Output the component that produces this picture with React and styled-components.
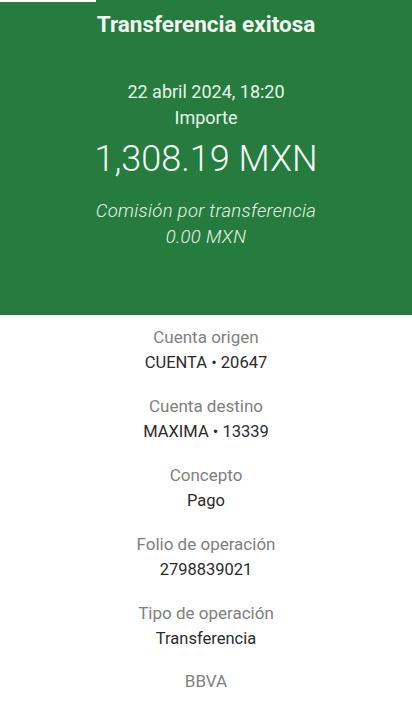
import React from 'react'
import styled, {createGlobalStyle} from 'styled-components'

const GlobalStyle = createGlobalStyle`
body {
    margin: 0;
    background: #ffffff;
    font-family: Roboto, "Liberation Sans", sans-serif;
}
`

const details = [
    {label: 'Cuenta origen', value: 'CUENTA • 20647'},
    {label: 'Cuenta destino', value: 'MAXIMA • 13339'},
    {label: 'Concepto', value: 'Pago'},
    {label: 'Folio de operación', value: '2798839021'},
    {label: 'Tipo de operación', value: 'Transferencia'},
]

export default function App() {
    return <Page>
        <GlobalStyle />
        <Header>
            <TopStrip />
            <Title>Transferencia exitosa</Title>
            <DateLine>22 abril 2024, 18:20</DateLine>
            <SubLine>Importe</SubLine>
            <Amount>1,308.19 MXN</Amount>
            <Fee>
                <FeeLine>Comisión por transferencia</FeeLine>
                <FeeLine>0.00 MXN</FeeLine>
            </Fee>
        </Header>
        <Details>
            {details.map(d => <Item key={d.label}>
                <Label>{d.label}</Label>
                <Value>{d.value}</Value>
            </Item>)}
            <Bank>BBVA</Bank>
        </Details>
    </Page>
}

const Page = styled.div`
width: 412px;
height: 702px;
overflow: hidden;
background: #ffffff;
`

const Header = styled.header`
position: relative;
height: 315px;
background: #267b3f;
color: #e8f7e6;
display: flex;
flex-direction: column;
align-items: center;
box-sizing: border-box;
padding-top: 10px;
`

const TopStrip = styled.div`
position: absolute;
top: 0;
left: 0;
width: 96px;
height: 2px;
background: #ffffff;
`

const Title = styled.h1`
margin: 0;
font-size: 22.5px;
font-weight: 700;
line-height: 28px;
color: #f2f8f0;
`

const DateLine = styled.div`
margin-top: 41px;
font-size: 18px;
line-height: 26px;
`

const SubLine = styled.div`
font-size: 18px;
line-height: 26px;
`

const Amount = styled.div`
margin-top: 6px;
font-size: 36px;
font-weight: 300;
line-height: 44px;
color: #f4fbf2;
`

const Fee = styled.div`
margin-top: 17px;
display: flex;
flex-direction: column;
align-items: center;
`

const FeeLine = styled.div`
font-size: 18.5px;
font-style: italic;
font-weight: 300;
letter-spacing: 0.3px;
line-height: 26px;
`

const Details = styled.section`
display: flex;
flex-direction: column;
align-items: center;
padding-top: 10px;
`

const Item = styled.div`
display: flex;
flex-direction: column;
align-items: center;
height: 69px;
`

const Label = styled.div`
font-size: 17px;
line-height: 24px;
color: #808080;
`

const Value = styled.div`
font-size: 16.5px;
line-height: 28px;
color: #2b2b2b;
`

const Bank = styled.div`
font-size: 17px;
line-height: 22px;
color: #808080;
`
